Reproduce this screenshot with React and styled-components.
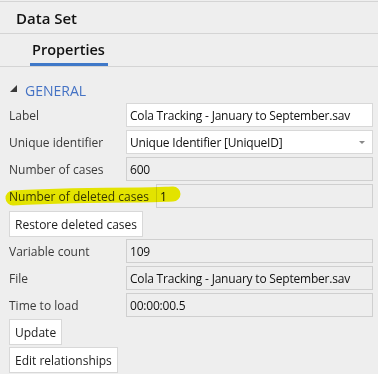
import React from "react";
import styled, { createGlobalStyle } from "styled-components";

const Global = createGlobalStyle`
  html, body { margin: 0; padding: 0; background: #eeeeee; }
  body { font-family: "Open Sans", "Noto Sans", sans-serif; color: #333; }
`;

const Panel = styled.div`
  width: 378px;
  height: 374px;
  padding-top: 1px;
  box-sizing: border-box;
  overflow: hidden;
  background: #eeeeee;
`;

const TitleBar = styled.div`
  height: 31px;
  border-top: 1px solid #d4d4d4;
  border-bottom: 1px solid #d4d4d4;
  display: flex;
  align-items: center;
  padding-left: 16px;
  font-size: 15px;
  font-weight: 600;
  color: #111;
`;

const Tabs = styled.div`
  height: 32px;
  border-bottom: 1px solid #d4d4d4;
  display: flex;
  padding-left: 30px;
`;

const Tab = styled.div`
  display: flex;
  align-items: center;
  padding: 1px 3px 0 2px;
  font-size: 14.5px;
  font-weight: 600;
  color: #111;
  border-bottom: 3px solid ${(p) => (p.active ? "#3f78c8" : "transparent")};
`;

const Section = styled.div`
  padding: 13px 5px 0 9px;
`;

const SectionHead = styled.div`
  display: flex;
  align-items: center;
  height: 20px;
  gap: 8px;
  margin-bottom: 3px;
  color: #4472c4;
  font-size: 14px;
`;

const Caret = styled.span`
  width: 0;
  height: 0;
  border-left: 7px solid transparent;
  border-bottom: 7px solid #3a3a3a;
  margin: -3px 0 0 1px;
`;

const Rows = styled.div`
  display: flex;
  flex-direction: column;
  gap: 3px;
`;

const Row = styled.div`
  position: relative;
  display: flex;
  align-items: center;
  height: 24px;
`;

const Label = styled.div`
  min-width: 117px;
  padding-right: 7px;
  box-sizing: border-box;
  font-size: 12px;
  color: #3a3a3a;
  white-space: nowrap;
  position: relative;
  z-index: 1;
`;

const Field = styled.div`
  flex: 1;
  height: 24px;
  box-sizing: border-box;
  border: 1px solid ${(p) => (p.editable ? "#d8d8d8" : "#cfcfcf")};
  background: ${(p) => (p.editable ? "#ffffff" : "#eeeeee")};
  display: flex;
  align-items: center;
  padding-left: 3px;
  font-size: 12px;
  letter-spacing: -0.2px;
  color: #111;
  white-space: nowrap;
  overflow: hidden;
  position: relative;
  z-index: 1;
  ${(p) => (p.faint ? "background: transparent;" : "")}
`;

const Arrow = styled.span`
  margin-left: auto;
  margin-right: 7px;
  width: 0;
  height: 0;
  border-left: 3px solid transparent;
  border-right: 3px solid transparent;
  border-top: 3px solid #888;
`;

const Button = styled.button`
  align-self: flex-start;
  height: 26px;
  box-sizing: border-box;
  border: 1px solid #d8d8d8;
  background: #ffffff;
  font-family: inherit;
  font-size: 12px;
  color: #222;
  padding: 0 5px;
  margin: ${(p) => p.m || "0"};
  cursor: pointer;
`;

const Highlight = styled.svg`
  position: absolute;
  left: -9px;
  top: -3px;
  z-index: 2;
  mix-blend-mode: multiply;
  pointer-events: none;
`;

export default function App() {
  const title = "Cola Tracking - January to September.sav";
  return (
    <Panel>
      <Global />
      <TitleBar>Data Set</TitleBar>
      <Tabs>
        <Tab active>Properties</Tab>
      </Tabs>
      <Section>
        <SectionHead>
          <Caret />
          GENERAL
        </SectionHead>
        <Rows>
          <Row>
            <Label>Label</Label>
            <Field editable>{title}</Field>
          </Row>
          <Row>
            <Label>Unique identifier</Label>
            <Field editable>
              Unique Identifier [UniqueID]
              <Arrow />
            </Field>
          </Row>
          <Row>
            <Label>Number of cases</Label>
            <Field>600</Field>
          </Row>
          <Row>
            <Label>Number of deleted cases</Label>
            <Field faint>1</Field>
            <Highlight width="190" height="30" viewBox="0 0 190 30">
              <path
                d="M13 17 C 50 15, 100 14, 140 14 C 158 14, 168 13, 173 13"
                stroke="#f4f400"
                strokeWidth="15"
                strokeLinecap="round"
                fill="none"
              />
            </Highlight>
          </Row>
          <Button m="0 0 -1px">Restore deleted cases</Button>
          <Row>
            <Label>Variable count</Label>
            <Field>109</Field>
          </Row>
          <Row>
            <Label>File</Label>
            <Field>{title}</Field>
          </Row>
          <Row>
            <Label>Time to load</Label>
            <Field>00:00:00.5</Field>
          </Row>
          <Button m="-1px 0 0">Update</Button>
          <Button m="-1px 0 0">Edit relationships</Button>
        </Rows>
      </Section>
    </Panel>
  );
}
